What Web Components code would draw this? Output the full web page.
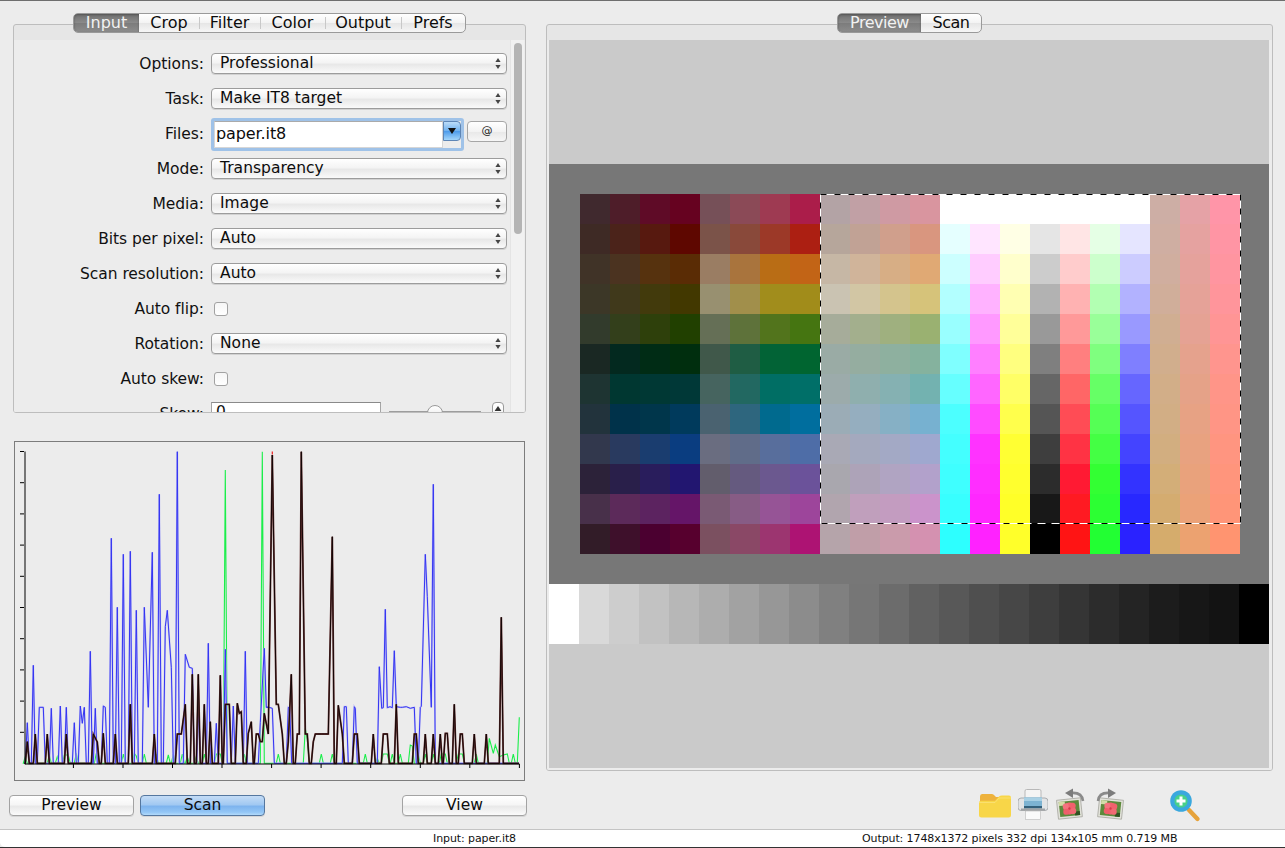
<!DOCTYPE html>
<html><head><meta charset="utf-8"><title>Scan</title>
<style>
html,body{margin:0;padding:0;background:#ececec;}
body{font:15px/1.2 "DejaVu Sans",sans-serif;color:#111;}
</style></head>
<body>
<scan-window>
  <div slot="left" style="display:contents">
    <tab-box tabs="Input,Crop,Filter,Color,Output,Prefs" widths="65,60,61,65,76,64" h="389">
      <scroll-form>
        <form-row label="Options:"><mac-select value="Professional"></mac-select></form-row>
        <form-row label="Task:"><mac-select value="Make IT8 target"></mac-select></form-row>
        <form-row label="Files:"><mac-combo value="paper.it8"></mac-combo></form-row>
        <form-row label="Mode:"><mac-select value="Transparency"></mac-select></form-row>
        <form-row label="Media:"><mac-select value="Image"></mac-select></form-row>
        <form-row label="Bits per pixel:"><mac-select value="Auto"></mac-select></form-row>
        <form-row label="Scan resolution:"><mac-select value="Auto"></mac-select></form-row>
        <form-row label="Auto flip:"><mac-check></mac-check></form-row>
        <form-row label="Rotation:"><mac-select value="None"></mac-select></form-row>
        <form-row label="Auto skew:"><mac-check></mac-check></form-row>
        <form-row label="Skew:"><mac-spin value="0"></mac-spin></form-row>
      </scroll-form>
    </tab-box>
    <hist-chart></hist-chart>
    <button-row>
      <mac-button>Preview</mac-button>
      <mac-button primary>Scan</mac-button>
      <mac-button class="end" style="margin-left:131px">View</mac-button>
    </button-row>
  </div>
  <div slot="right" style="display:contents">
    <tab-box tabs="Preview,Scan" widths="83,60" h="747" style="letter-spacing:-.5px">
      <target-view></target-view>
    </tab-box>
    <tool-bar></tool-bar>
  </div>
  <span slot="input">Input: paper.it8</span>
  <span slot="output">Output: 1748x1372 pixels 332 dpi 134x105 mm 0.719 MB</span>
</scan-window>

<script>
const def=(name,css,html)=>{
  customElements.define(name,class extends HTMLElement{
    constructor(){super();const r=this.attachShadow({mode:'open'});
      r.innerHTML='<style>'+css+'</style>'+(typeof html==='function'?html(this):html);}
  });
};

def('scan-window',`
:host{display:flex;flex-direction:column;width:1285px;height:848px;box-sizing:border-box;border-top:1px solid #6e6e6e;border-bottom:1px solid #333;overflow:hidden;background:#ececec}
.main{flex:1;min-height:0;display:grid;grid-template-columns:513px 727px;column-gap:20px;padding:12px 0 0 13px}
.col{display:flex;flex-direction:column;min-width:0}
.status{height:18px;flex:none;box-sizing:border-box;border-top:1px solid #c4c4c4;background:#fff;border-radius:0 0 0 5px;display:grid;grid-template-columns:516px 1fr;font:11px/17px "DejaVu Sans",sans-serif;letter-spacing:-.1px;color:#111}
.status div:first-child{text-align:right}
.status div:last-child{padding-left:346px}
`,`<div class="main"><div class="col"><slot name="left"></slot></div><div class="col"><slot name="right"></slot></div></div>
<div class="status"><div><slot name="input"></slot></div><div><slot name="output"></slot></div></div>`);

def('tab-box',`
:host{display:flex;flex-direction:column;flex:none}
.tabs{display:flex;align-self:center;height:20px;box-sizing:border-box;border:1px solid #9a9a9a;border-radius:5px;background:linear-gradient(#fff,#f3f3f3 50%,#e6e6e6 52%,#f6f6f6);margin-bottom:-9px;position:relative;z-index:1;font-size:16px;line-height:17px}
.t{text-align:center;box-sizing:border-box;position:relative;color:#0c0c0c}
.t+.t:not(.after)::before{content:"";position:absolute;left:0;top:3px;bottom:3px;width:1px;background:#c8c8c8}
.t.on{color:#f2f2f2;background:linear-gradient(#6f6f6f,#8b8b8b 50%,#7c7c7c 52%,#8c8c8c);border-radius:4px 0 0 4px;box-shadow:inset 0 1px 2px #555}
.box{flex:none;border:1px solid #bdbdbd;border-radius:3px;background:#e6e6e6;padding-top:15px;display:flex;flex-direction:column;overflow:hidden;box-sizing:border-box}
.in{flex:1;min-height:0;background:#ececec;display:flex;flex-direction:column;letter-spacing:0}
`,h=>{const ts=h.getAttribute('tabs').split(','),ws=h.getAttribute('widths').split(',');
  return `<div class="tabs">`+ts.map((t,i)=>`<div class="t ${i==0?'on':''} ${i==1?'after':''}" style="width:${ws[i]}px">${t}</div>`).join('')+`</div><div class="box" style="height:${h.getAttribute('h')}px"><div class="in"><slot></slot></div></div>`;});

def('scroll-form',`
:host{display:flex;flex:1;min-height:0;overflow:hidden;background:#ececec}
.f{flex:1;padding-top:6px;min-width:0;overflow:hidden}
.sb{width:14px;flex:none;background:#f1f1f1;padding:3px 3px 0 3px;box-sizing:border-box;border-left:1px solid #e4e4e4;margin-right:1px}
.th{width:8px;height:191px;background:#b4b4b4;border-radius:4px}
`,`<div class="f"><slot></slot></div><div class="sb"><div class="th"></div></div>`);

def('form-row',`
:host{display:flex;height:35px;align-items:center}
.l{width:190px;flex:none;text-align:right;font-size:15.5px;letter-spacing:-.05px;margin-right:7px;color:#111;padding-top:2px}
.c{flex:1;min-width:0;display:flex}
`,h=>`<div class="l">${h.getAttribute('label')}</div><div class="c"><slot></slot></div>`);

const arrows=`<svg width="6" height="11" viewBox="0 0 6 11" style="position:absolute;right:5px;top:4px"><path d="M3 0 5.600 4H.4zM3 11 .4 7h5.200z" fill="#444"/></svg>`;
def('mac-select',`
:host{display:block;position:relative;width:296px;height:21px;box-sizing:border-box;border:1px solid #9c9c9c;border-radius:4px;background:linear-gradient(#fff,#f4f4f4 45%,#e8e8e8 55%,#f4f4f4 85%,#fafafa);padding-left:8px;font-size:15.5px;line-height:19px;letter-spacing:.03px;color:#0c0c0c;box-shadow:0 1px 0 #d2d2d2}
`,h=>h.getAttribute('value')+arrows);

def('mac-check',`
:host{display:block;width:14px;height:14px;box-sizing:border-box;border:1px solid #a2a2a2;border-radius:3px;background:linear-gradient(#f6f6f6,#fff);margin-left:3px;margin-top:1px}
`,``);

def('mac-combo',`
:host{display:flex;align-items:flex-start;gap:3px}
.ring{width:253px;height:33px;box-sizing:border-box;border:3px solid #9fc2e8;border-radius:3px;display:flex;align-items:flex-start;background:#ececec;margin-top:1px}
.tx{width:229px;height:27px;box-sizing:border-box;background:#fff;border:1px solid #d6d6d6;border-top-color:#aaa;padding-left:1px;font-size:16px;line-height:23px;letter-spacing:-.1px;color:#0c0c0c}
.ar{width:18px;height:20px;box-sizing:border-box;border:1px solid #5d85b5;border-radius:0 4px 4px 0;background:linear-gradient(#bcdcf8,#6eb0ee 50%,#4d9bea 52%,#a3d6fb);display:flex;align-items:center;justify-content:center}
.at{width:40px;height:21px;box-sizing:border-box;border:1px solid #a6a6a6;border-radius:4px;margin-top:4px;background:linear-gradient(#fff,#f3f3f3 50%,#e9e9e9 55%,#f6f6f6);text-align:center;font-size:11px;line-height:18px;color:#222}
`,h=>`<div class="ring"><div class="tx">${h.getAttribute('value')}</div><div class="ar"><svg width="8" height="6" viewBox="0 0 8 6"><path d="M0 0h8L4 6z" fill="#111"/></svg></div></div><div class="at">@</div>`);

def('mac-spin',`
:host{display:flex;align-items:flex-start;height:24px}
.in{width:170px;height:24px;box-sizing:border-box;border:1px solid #a5a5a5;border-top-color:#8a8a8a;background:#fff;padding-left:4px;font-size:15.5px;line-height:18px}
.s{width:92px;margin-left:8px;position:relative;height:20px}
.s i{position:absolute;left:0;right:0;top:9px;height:2px;background:#9d9d9d}
.s b{position:absolute;left:38px;top:3px;width:16px;height:16px;border-radius:50%;box-sizing:border-box;border:1px solid #9a9a9a;background:linear-gradient(#fff,#e6e6e6)}
.u{width:12px;height:24px;box-sizing:border-box;margin-left:11px;border:1px solid #9a9a9a;border-radius:4px;background:linear-gradient(#fff,#eee);display:flex;justify-content:center;padding-top:3px}
`,h=>`<div class="in">${h.getAttribute('value')}</div><div class="s"><i></i><b></b></div><div class="u"><svg width="8" height="5" viewBox="0 0 8 5"><path d="M4 0 7.4 5H.6z" fill="#333"/></svg></div>`);

def('mac-button',`
:host{display:block;flex:none;width:125px;height:21px;box-sizing:border-box;border:1px solid #a3a3a3;border-radius:4px;background:linear-gradient(#fff,#f6f6f6 45%,#e9e9e9 55%,#f5f5f5 85%,#fbfbfb);text-align:center;font-size:15.5px;line-height:18px;color:#0c0c0c;box-shadow:0 1px 0 #d6d6d6}
:host([primary]){border-color:#55779f;background:linear-gradient(#c4dcf6,#a2c9f2 45%,#7eb4ee 55%,#93c6f6 85%,#b2dafa)}
`,`<slot></slot>`);

def('button-row',`
:host{display:flex;gap:6px;margin:14px 0 0 -4px}
`,`<slot></slot>`);

const Z=(a,ox)=>a.map(([x,y])=>[ox+x/3,440+y/3]);
const G5=[[46,950],[76,950],[118,945],[142,950],[163,945],[175,945],[199,940],[259,940],[340,942],[373,940],[379,948],[403,942],[439,942],[475,945],[490,942],[517,942],[532,950],[559,950],[583,942],[619,942],[631,942],[646,90],[703,942],[757,35]];
const G6=[[40,942],[121,865],[127,900],[169,942],[202,942],[301,942],[337,955],[355,942],[367,942],[382,942],[406,942],[436,915],[442,918],[460,942],[481,942],[505,942],[529,942],[541,942],[580,942],[592,942],[634,942],[673,895],[685,940],[691,915],[703,950],[715,945],[727,942],[745,942],[763,832]];
const B5=[[52,848],[70,676],[88,802],[100,802],[124,805],[151,798],[169,802],[193,848],[211,798],[217,850],[223,802],[241,634],[256,805],[280,798],[286,802],[304,295],[322,502],[340,343],[361,334],[379,511],[403,502],[415,802],[427,337],[448,163],[466,560],[472,511],[484,682],[502,35],[526,643],[538,682],[547,685],[566,802],[595,610],[619,850],[646,628],[670,798],[706,634],[751,848],[763,625],[769,802],[775,802]];
const B6=[[5,802],[12,802],[22,805],[70,802],[74,805],[238,800],[244,800],[268,800],[271,805],[343,680],[350,805],[355,803],[361,508],[367,803],[375,800],[382,803],[388,632],[394,800],[406,802],[412,802],[424,800],[436,805],[448,802],[466,802],[469,799],[481,343],[487,470],[499,802],[505,133]];
const K5=[[52,905],[76,882],[112,882],[169,882],[250,882],[262,906],[280,880],[316,882],[361,793],[433,882],[502,882],[514,882],[526,793],[547,703],[565,703],[583,793],[601,845],[631,706],[646,793],[658,793],[682,790],[688,820],[694,815],[715,880],[724,845],[739,882],[745,882],[751,905],[757,905],[763,820],[775,882]];
const K6=[[10,882],[22,45],[34,793],[40,793],[52,882],[70,906],[79,703],[97,882],[103,882],[109,35],[121,882],[127,882],[145,905],[151,882],[157,882],[169,882],[178,882],[190,882],[202,290],[220,796],[232,882],[268,882],[277,882],[325,882],[355,882],[367,882],[394,793],[448,882],[454,882],[481,882],[505,882],[526,882],[541,880],[547,880],[568,793],[586,882],[592,882],[628,882],[664,882],[709,532]];
const BASE=763.3;
function poly(a5,a6){
  const pts=[...Z(a5,10),...Z(a6,265)];
  let out=[[24.5,BASE]];
  pts.forEach((p,i)=>{const q=pts[i-1];const px=+p[0].toFixed(1),py=+p[1].toFixed(1);
    if(!q||p[0]-q[0]>4.2){ if(q)out.push([+(q[0]+2).toFixed(1),BASE]); out.push([+(px-2).toFixed(1),BASE]); }
    out.push([px,py]);});
  const l=pts[pts.length-1];
  if(l[0]<518)out.push([l[0]+2,BASE]);
  if(out[out.length-1][0]<519)out.push([519,BASE]);
  return out.map(p=>(p[0]-15).toFixed(1)+','+(p[1]-442).toFixed(1)).join(' ');
}
def('hist-chart',`
:host{display:block;flex:none;width:511px;height:340px;box-sizing:border-box;margin:28px 0 0 1px;border:1px solid #7c7c7c;background:#ececec}
svg{display:block}
`,()=>{
  let ticks='';
  for(let i=0;i<10;i++){const y=(451.5+i*31.2-442).toFixed(1);ticks+=`<path d="M5 ${y}h4"/>`;}
  for(let i=1;i<=10;i++){const x=(73.4+(i-1)*49.55-15).toFixed(1);ticks+=`<path d="M${x} 322v4"/>`;}
  const g=poly(G5,G6),b=poly(B5,[...B6]),k=poly(K5,K6);
  return `<svg width="509" height="338" viewBox="0 0 509 338" fill="none">
  <polyline points="${g}" stroke="#1aee4a" stroke-width="1.100"/>
  <polyline points="${b}" stroke="#c4c4f4" stroke-width="1.800"/>
  <polyline points="${b}" stroke="#3434f2" stroke-width="1"/>
  <path d="M257.300 9.500v3" stroke="#f02020" stroke-width="1.200"/>
  <polyline points="${k}" stroke="#6a3636" stroke-width="1.800"/>
  <polyline points="${k}" stroke="#140606" stroke-width="1"/>
  <path d="M10 322V9.500M10 322H504.500" stroke="#000" stroke-width="1"/>
  <g stroke="#000" stroke-width="1">${ticks}</g></svg>`;
});

const D=[
"40292e 4e1d29 5f0b27 660220 765058 8b4a57 9e3a52 ab1d4a b3a3a5 c1a0a5 cf9aa3 d9959f ffffff ffffff ffffff ffffff ffffff ffffff ffffff cdaea5 e5a2a6 ff95a8",
"3e2a25 4b231a 57190f 5e0700 7b5349 89493a 9c3928 ac1f12 b6a69b c1a295 d09f8c d9967f e5ffff ffe5ff ffffe5 e5e5e5 ffe5e5 e5ffe5 e5e5ff cfaea2 e5a2a0 ff95a4",
"403327 4b3320 56320e 5a2c05 9a7d63 a9743d b96d15 c26416 c6b7a5 d0b49a d7ae85 e0a974 ccffff ffccff ffffcc cccccc ffcccc ccffcc ccccff d0ae9f e5a29c ff95a0",
"3c3727 40391b 423a0c 423800 989070 a18f4b a18d1c a18c1a cac3b2 d2c6a4 d4c48d d6c37a b2ffff ffb2ff ffffb2 b2b2b2 ffb2b2 b2ffb2 b2b2ff d0ae9a e5a298 ff959b",
"323b2c 333f1b 2e400b 214000 656f56 5e723a 52741c 457511 a6ac9a a3af8d 9fb07f 9ab171 99ffff ff99ff ffff99 999999 ff9999 99ff99 9999ff d0ae92 e5a294 ff9595",
"1a2823 03291f 002c15 002e0e 40584a 1f5d44 026336 006530 9aaba5 95ada0 8eb09f 85b29e 7fffff ff7fff ffff7f 7f7f7f ff7f7f 7fff7f 7f7fff d1ae8d e5a28d ff958e",
"1e3432 003731 003834 003837 46645f 226861 006e64 006f68 9cabab 8fafae 85b1b2 73b2b0 66ffff ff66ff ffff66 666666 ff6666 66ff66 6666ff d2ae88 e5a288 ff9588",
"22333c 00324a 00364b 003a5c 4a6270 2e667e 006a8e 006e9e 9bacb6 95aebf 86b0c5 77b1d0 4cffff ff4cff ffff4c 555555 ff4c55 55ff55 5555ff d2ae85 e7a284 ff9585",
"32384d 293a5f 1a3d6f 0a3d80 6a6d80 606c89 586e9c 4e6da7 a9a9b5 a4a9be a3a9c5 9fa8cf 44ffff ff33ff ffff33 3e3e3e ff3344 44ff44 4444ff d2ae80 e8a280 ff9580",
"2c2239 291f4a 291d5c 221670 625d6c 655a7f 6b588f 6b529a a9a7ae ada3b8 b0a4c2 b2a1cb 3fffff ff2eff ffff2e 2c2c2c ff1a33 33ff33 3333ff d3ae78 e9a27c ff957c",
"48304a 5c2a5a 5c2360 651568 7a5a74 875c85 965496 9d459b b1a5ae c09fbc c39cc0 cb93cb 38ffff ff28ff ffff28 181818 ff1a22 2cff33 2828ff d4ac70 eba278 ff9578",
"321c28 3e102b 4b0030 57002e 7b5060 8a4866 9c3570 ad1373 b5a4aa c09ea8 ca9bab d491b0 2dffff ff22ff ffff2a 000000 ff1414 22ff33 2a22ff d5ac6c eca270 ff9470"];
const R="ffffff d9d9d9 cdcdcd c2c2c2 b7b7b7 adadad a2a2a2 979797 8c8c8c 808080 767676 6c6c6c 616161 585858 4f4f4f 474747 3e3e3e 353535 2c2c2c 242424 1c1c1c 171717 131313 000000".split(' ');
def('target-view',`
:host{display:flex;flex-direction:column;flex:1;margin:0 3px 2px 2px;background:#cacaca;min-height:0}
.top{height:124px;flex:none}
.band{height:360px;padding:30px 29px 30px 31px;background:#777;flex:none}
.grid{position:relative;display:grid;grid-template-columns:repeat(22,30px);grid-auto-rows:30px;width:660px}
.grid svg{position:absolute;left:239px;top:-1px}
.ramp{height:60px;display:grid;grid-template-columns:repeat(24,30px);flex:none}
`,()=>{
  const cells=D.map(r=>r.split(' ').map(c=>`<i style="background:#${c}"></i>`).join('')).join('');
  const ramp=R.map(c=>`<i style="background:#${c}"></i>`).join('');
  const rect='M1.5 1.5H421.5V330.5H1.5Z';
  return `<div class="top"></div><div class="band"><div class="grid">${cells}<svg width="424" height="333" fill="none"><path d="${rect}" stroke="#fff"/><path d="${rect}" stroke="#000" stroke-dasharray="6 8"/></svg></div></div><div class="ramp">${ramp}</div>`;
});

const photo=`<rect x="0" y="0" width="24" height="19" fill="#e2e2da" stroke="#a8a8a0" stroke-width=".8"/>
<rect x="2" y="2" width="20" height="15" fill="#5c8a3c"/><rect x="2" y="2" width="6" height="4" fill="#d2dca8"/><rect x="17" y="13" width="5" height="4" fill="#2f5222"/>
<circle cx="12" cy="9.500" r="6" fill="#ef6470"/><circle cx="8.500" cy="7" r="3" fill="#f4737e"/><circle cx="15.500" cy="7" r="3" fill="#f0616c"/><circle cx="8.500" cy="12.500" r="3" fill="#ee5f6a"/><circle cx="15.500" cy="12.500" r="3" fill="#f16a74"/><circle cx="12" cy="9.500" r="1.200" fill="#d23a4a"/>`;
def('tool-bar',`
:host{display:flex;align-items:flex-start;height:36px;margin-top:17px;padding-left:433px}
svg{display:block;flex:none}
`,`
<svg style="margin-top:5px" width="32" height="25" viewBox="0 0 32 25"><path d="M1 3.5Q1 1 3 1h10q1.500 0 2.500 1.500L17 4h12q2 0 2 2v2H1z" fill="#eeb23c"/><path d="M0 9.500Q0 8 2 7.800L16 7.800 20 3.500Q21 2.500 23 2.500h7q2 0 2 2V22q0 2.500-2.500 2.500h-27Q0 24.500 0 22z" fill="#f8d648"/><path d="M0 9.500h16l4-4.500H32" stroke="#fbe88a" fill="none" stroke-width=".6"/></svg>
<svg style="margin:1px 0 0 7px" width="30" height="31" viewBox="0 0 30 31"><rect x="7" y="0.500" width="16" height="12" rx="1.500" fill="#f4f4f4" stroke="#b8b8b8"/><path d="M3 9h24q3 0 3 3.500v6q0 3-3 3H3q-3 0-3-3v-6Q0 9 3 9z" fill="#e2e4e6" stroke="#9a9da0" stroke-width=".8"/><rect x="6" y="8.500" width="18" height="10" fill="#7db3d2"/><rect x="6" y="8.500" width="18" height="3.500" fill="#a8d0e4"/><rect x="6" y="17" width="18" height="2.500" fill="#34617c"/><rect x="3" y="19.500" width="24" height="2" fill="#a0a3a6"/><rect x="7.500" y="22" width="15" height="8.500" fill="#fafafa" stroke="#b8b8b8" stroke-width=".6"/></svg>
<svg style="margin:0 0 0 8px" width="30" height="34" viewBox="0 0 30 34"><g transform="translate(1.500 11) rotate(-6 12 10)">${photo}</g><path d="M27 13Q26 4 15 5" fill="none" stroke="#8a8a8a" stroke-width="2.600"/><path d="M17 0.500 9 5l8 5z" fill="#7c7c7c"/></svg>
<svg style="margin:0 0 0 9px" width="30" height="34" viewBox="0 0 30 34"><g transform="translate(3.500 11) rotate(6 12 10)">${photo}</g><path d="M3 13Q4 4 15 5" fill="none" stroke="#8a8a8a" stroke-width="2.600"/><path d="M13 0.500 21 5l-8 5z" fill="#7c7c7c"/></svg>
<svg style="margin:2px 0 0 45px" width="31" height="33" viewBox="0 0 31 33"><path d="M19 20 27.500 29" stroke="#e6a23a" stroke-width="4.400" stroke-linecap="round"/><circle cx="11" cy="11" r="10.800" fill="#3aa8de"/><circle cx="11" cy="11" r="6.600" fill="#48d08a"/><path d="M11 6.500v9M6.500 11h9" stroke="#fff" stroke-width="3"/></svg>
`);
</script>
</body></html>
